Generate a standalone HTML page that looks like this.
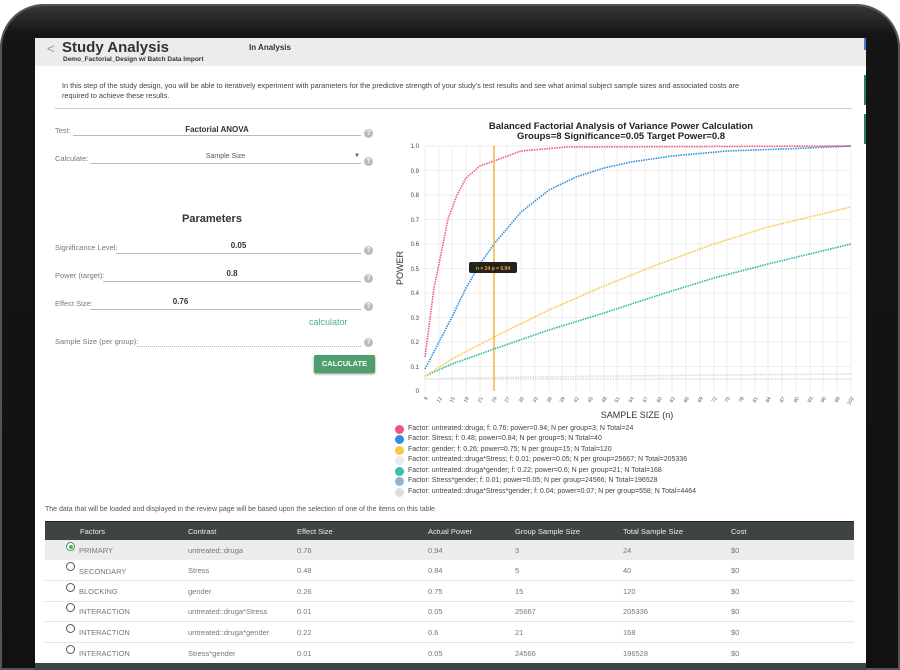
<!DOCTYPE html>
<html style="overflow:hidden;width:900px;height:670px"><head><meta charset="utf-8"><style>
*{margin:0;padding:0;box-sizing:border-box}
html,body{overflow:hidden}
body{width:900px;height:670px;overflow:hidden;background:#fff;font-family:"Liberation Sans",sans-serif;position:relative}
.a{position:absolute;white-space:nowrap}
.bezel{position:absolute;left:0;top:4px;width:900px;height:666px;background:linear-gradient(#3a3a3a,#151515 30px,#111);border-radius:44px 44px 0 0;box-shadow:inset 0 0 0 2px #555}
.screen{position:absolute;left:35px;top:38px;width:831px;height:632px;background:#fff;overflow:hidden}
.lbl{font-size:7.5px;color:#777}
.val{font-size:8px;color:#333;font-weight:bold;text-align:center}
.ul{position:absolute;height:1px;background:#bbb}
.q{position:absolute;width:9px;height:9px;border-radius:50%;background:#bbb;color:#fff;font-size:7px;line-height:9px;text-align:center;font-weight:bold}
.th{font-size:7.5px;color:#eee}
.td{font-size:7.5px;color:#777}
.rad{position:absolute;width:9px;height:9px;border-radius:50%;border:1px solid #555;background:#fff}
.lg{font-size:7px;color:#444}
.dot{position:absolute;width:9px;height:9px;border-radius:50%}
</style></head><body>
<div class="bezel"></div>
<div class="screen">
 <div class="a" style="left:0;top:0;width:831px;height:28px;background:#ececec"></div>
 <div class="a" style="left:829px;top:0;width:2px;height:12px;background:#4a7bd8"></div>
 <div class="a" style="left:829px;top:37px;width:2px;height:30px;background:#2d7a5c"></div>
 <div class="a" style="left:829px;top:76px;width:2px;height:30px;background:#2d7a5c"></div>
 <div class="a" style="left:12px;top:3px;font-size:13px;color:#999">&lt;</div>
 <div class="a" style="left:27px;top:1px;font-size:15px;font-weight:bold;color:#333">Study Analysis</div>
 <div class="a" style="left:28px;top:18px;font-size:6.5px;font-weight:bold;color:#333">Demo_Factorial_Design w/ Batch Data Import</div>
 <div class="a" style="left:214px;top:5px;font-size:8px;font-weight:bold;color:#333">In Analysis</div>
 <div class="a" style="left:27px;top:43px;font-size:7.3px;color:#444;line-height:10px">In this step of the study design, you will be able to iteratively experiment with parameters for the predictive strength of your study's test results and see what animal subject sample sizes and associated costs are<br>required to achieve these results.</div>
 <div class="a" style="left:20px;top:70px;width:797px;height:1px;background:#ccc"></div>

 <div class="a lbl" style="left:20px;top:88px">Test:</div><div class="ul" style="left:38px;top:97px;width:288px"></div>
 <div class="a val" style="left:38px;top:87px;width:288px;font-weight:bold">Factorial ANOVA</div><div class="q" style="left:329px;top:91px">?</div>
 <div class="a lbl" style="left:20px;top:116px">Calculate:</div><div class="ul" style="left:55px;top:125px;width:271px"></div>
 <div class="a" style="left:55px;top:115px;width:271px;text-align:center;font-size:7px;color:#555">Sample Size</div>
 <div class="a" style="left:319px;top:115px;font-size:6px;color:#555">▼</div><div class="q" style="left:329px;top:119px">?</div>
 <div class="a" style="left:147px;top:175px;font-size:11px;font-weight:bold;color:#333">Parameters</div>
 <div class="a lbl" style="left:20px;top:205px">Significance Level:</div><div class="ul" style="left:81px;top:215px;width:245px"></div>
 <div class="a val" style="left:81px;top:203px;width:245px">0.05</div><div class="q" style="left:329px;top:208px">?</div>
 <div class="a lbl" style="left:20px;top:233px">Power (target):</div><div class="ul" style="left:68px;top:243px;width:258px"></div>
 <div class="a val" style="left:68px;top:231px;width:258px">0.8</div><div class="q" style="left:329px;top:236px">?</div>
 <div class="a lbl" style="left:20px;top:261px">Effect Size:</div><div class="ul" style="left:55px;top:271px;width:271px"></div>
 <div class="a val" style="left:55px;top:259px;width:271px;padding-right:90px">0.76</div><div class="q" style="left:329px;top:264px">?</div>
 <div class="a" style="left:274px;top:279px;font-size:9px;color:#4fae8e">calculator</div>
 <div class="a lbl" style="left:20px;top:299px">Sample Size (per group):</div><div class="ul" style="left:102px;top:308px;width:224px;background:none;border-top:1px dotted #bbb"></div>
 <div class="q" style="left:329px;top:300px">?</div>
 <div class="a" style="left:279px;top:317px;width:61px;height:18px;background:#4f9e6d;color:#fff;font-size:7.5px;font-weight:bold;text-align:center;line-height:18px;border-radius:2px;box-shadow:0 1px 2px #888">CALCULATE</div>
</div>

<svg class="a" style="left:0;top:0" width="900" height="670">
<g font-family="Liberation Sans,sans-serif">
<text x="621" y="129" font-size="9.5" font-weight="bold" text-anchor="middle" fill="#222">Balanced Factorial Analysis of Variance Power Calculation</text>
<text x="621" y="139" font-size="9.5" font-weight="bold" text-anchor="middle" fill="#222">Groups=8 Significance=0.05 Target Power=0.8</text>
<g stroke="#eee" stroke-width="1">
<line x1="425" y1="146" x2="851" y2="146"/><line x1="425" y1="170.5" x2="851" y2="170.5"/><line x1="425" y1="195" x2="851" y2="195"/><line x1="425" y1="219.5" x2="851" y2="219.5"/><line x1="425" y1="244" x2="851" y2="244"/><line x1="425" y1="268.5" x2="851" y2="268.5"/><line x1="425" y1="293" x2="851" y2="293"/><line x1="425" y1="317.5" x2="851" y2="317.5"/><line x1="425" y1="342" x2="851" y2="342"/><line x1="425" y1="366.5" x2="851" y2="366.5"/>
<path d="M425 146V391M439 146V391M452 146V391M466 146V391M480 146V391M494 146V391M507 146V391M521 146V391M535 146V391M549 146V391M562 146V391M576 146V391M590 146V391M604 146V391M617 146V391M631 146V391M645 146V391M659 146V391M672 146V391M686 146V391M700 146V391M714 146V391M727 146V391M741 146V391M755 146V391M768 146V391M782 146V391M796 146V391M810 146V391M823 146V391M837 146V391M851 146V391"/>
</g>
<g font-size="6" fill="#444" text-anchor="end">
<text x="419" y="148">1.0</text><text x="419" y="173">0.9</text><text x="419" y="197">0.8</text><text x="419" y="222">0.7</text><text x="419" y="246">0.6</text><text x="419" y="271">0.5</text><text x="419" y="295">0.4</text><text x="419" y="320">0.3</text><text x="419" y="344">0.2</text><text x="419" y="369">0.1</text><text x="419" y="393">0</text>
</g>
<g font-size="5" fill="#555">
<text transform="translate(428,398) rotate(-60)" text-anchor="end">9</text>
<text transform="translate(442,398) rotate(-60)" text-anchor="end">12</text>
<text transform="translate(455,398) rotate(-60)" text-anchor="end">15</text>
<text transform="translate(469,398) rotate(-60)" text-anchor="end">18</text>
<text transform="translate(483,398) rotate(-60)" text-anchor="end">21</text>
<text transform="translate(497,398) rotate(-60)" text-anchor="end">24</text>
<text transform="translate(510,398) rotate(-60)" text-anchor="end">27</text>
<text transform="translate(524,398) rotate(-60)" text-anchor="end">30</text>
<text transform="translate(538,398) rotate(-60)" text-anchor="end">33</text>
<text transform="translate(552,398) rotate(-60)" text-anchor="end">36</text>
<text transform="translate(565,398) rotate(-60)" text-anchor="end">39</text>
<text transform="translate(579,398) rotate(-60)" text-anchor="end">42</text>
<text transform="translate(593,398) rotate(-60)" text-anchor="end">45</text>
<text transform="translate(607,398) rotate(-60)" text-anchor="end">48</text>
<text transform="translate(620,398) rotate(-60)" text-anchor="end">51</text>
<text transform="translate(634,398) rotate(-60)" text-anchor="end">54</text>
<text transform="translate(648,398) rotate(-60)" text-anchor="end">57</text>
<text transform="translate(662,398) rotate(-60)" text-anchor="end">60</text>
<text transform="translate(675,398) rotate(-60)" text-anchor="end">63</text>
<text transform="translate(689,398) rotate(-60)" text-anchor="end">66</text>
<text transform="translate(703,398) rotate(-60)" text-anchor="end">69</text>
<text transform="translate(717,398) rotate(-60)" text-anchor="end">72</text>
<text transform="translate(730,398) rotate(-60)" text-anchor="end">75</text>
<text transform="translate(744,398) rotate(-60)" text-anchor="end">78</text>
<text transform="translate(758,398) rotate(-60)" text-anchor="end">81</text>
<text transform="translate(771,398) rotate(-60)" text-anchor="end">84</text>
<text transform="translate(785,398) rotate(-60)" text-anchor="end">87</text>
<text transform="translate(799,398) rotate(-60)" text-anchor="end">90</text>
<text transform="translate(813,398) rotate(-60)" text-anchor="end">93</text>
<text transform="translate(826,398) rotate(-60)" text-anchor="end">96</text>
<text transform="translate(840,398) rotate(-60)" text-anchor="end">99</text>
<text transform="translate(854,398) rotate(-60)" text-anchor="end">102</text>
</g>
<text x="637" y="418" font-size="9" text-anchor="middle" fill="#333">SAMPLE SIZE (n)</text>
<text transform="translate(403,268) rotate(-90)" font-size="9" text-anchor="middle" fill="#333">POWER</text>
<g fill="none" stroke-width="1.6" stroke-dasharray="1.5 1">
<path stroke="#ddd" d="M425 379C500 377 700 375 851 374"/>
<path stroke="#ddd" d="M425 379H851"/>
<path stroke="#2db3a6" d="M425 376L452 364L494 349L549 330L604 313L659 295L714 278L768 264L851 244"/>
<path stroke="#f7c84a" d="M425 376L452 359L494 337L549 310L604 286L659 264L714 244L768 227L851 207"/>
<path stroke="#2e8fe0" d="M425 369L439 342L452 317L466 288L480 264L494 244L521 212L549 190L576 177L604 168L631 162L672 156L727 151L796 148.5L851 146"/>
<path stroke="#f0577a" d="M425 357L434 288L439 264L448 219L457 195L466 178L480 166L494 161L521 151L567 147L851 146"/>
</g>
<line x1="494" y1="146" x2="494" y2="391" stroke="#f5a623" stroke-width="1.3"/>
<rect x="469" y="262" width="48" height="11" rx="2" fill="#222"/>
<text x="493" y="270" font-size="5" fill="#f5a623" text-anchor="middle" font-weight="bold">n = 24 p = 0.94</text>
</g>
</svg>

<div class="dot" style="left:395px;top:425px;background:#f0577a"></div><div class="a lg" style="left:408px;top:425px">Factor: untreated::druga; f: 0.76; power=0.94; N per group=3; N Total=24</div>
<div class="dot" style="left:395px;top:435px;background:#2e8fe0"></div><div class="a lg" style="left:408px;top:435px">Factor: Stress; f: 0.48; power=0.84; N per group=5; N Total=40</div>
<div class="dot" style="left:395px;top:446px;background:#f7c84a"></div><div class="a lg" style="left:408px;top:446px">Factor: gender; f: 0.26; power=0.75; N per group=15; N Total=120</div>
<div class="dot" style="left:395px;top:456px;background:#e8eaee"></div><div class="a lg" style="left:408px;top:456px">Factor: untreated::druga*Stress; f: 0.01; power=0.05; N per group=25667; N Total=205336</div>
<div class="dot" style="left:395px;top:467px;background:#3dbcb0"></div><div class="a lg" style="left:408px;top:467px">Factor: untreated::druga*gender; f: 0.22; power=0.6; N per group=21; N Total=168</div>
<div class="dot" style="left:395px;top:477px;background:#90b4c8"></div><div class="a lg" style="left:408px;top:477px">Factor: Stress*gender; f: 0.01; power=0.05; N per group=24566; N Total=196528</div>
<div class="dot" style="left:395px;top:488px;background:#ddd"></div><div class="a lg" style="left:408px;top:488px">Factor: untreated::druga*Stress*gender; f: 0.04; power=0.07; N per group=558; N Total=4464</div>

<div class="a" style="left:45px;top:506px;font-size:7px;color:#555">The data that will be loaded and displayed in the review page will be based upon the selection of one of the items on this table</div>
<div class="a" style="left:45px;top:521px;width:809px;height:19px;background:#3e4441;border-top:1px solid #222"></div>
<div class="a th" style="left:80px;top:527px">Factors</div><div class="a th" style="left:188px;top:527px">Contrast</div><div class="a th" style="left:297px;top:527px">Effect Size</div><div class="a th" style="left:428px;top:527px">Actual Power</div><div class="a th" style="left:515px;top:527px">Group Sample Size</div><div class="a th" style="left:623px;top:527px">Total Sample Size</div><div class="a th" style="left:731px;top:527px">Cost</div>
<div class="a" style="left:45px;top:540px;width:809px;height:20px;background:#ececec"></div>
<div class="a" style="left:45px;top:580px;width:809px;height:1px;background:#e4e4e4"></div>
<div class="a" style="left:45px;top:601px;width:809px;height:1px;background:#e4e4e4"></div>
<div class="a" style="left:45px;top:621px;width:809px;height:1px;background:#e4e4e4"></div>
<div class="a" style="left:45px;top:642px;width:809px;height:1px;background:#e4e4e4"></div>
<div class="a" style="left:35px;top:663px;width:831px;height:7px;background:#3e4441"></div>

<div class="rad" style="left:66px;top:542px;border-color:#3a9a5a"><div style="position:absolute;left:1.5px;top:1.5px;width:4px;height:4px;border-radius:50%;background:#3cba5a"></div></div>
<div class="a td" style="left:79px;top:546px">PRIMARY</div><div class="a td" style="left:188px;top:546px">untreated::druga</div><div class="a td" style="left:297px;top:546px">0.76</div><div class="a td" style="left:428px;top:546px">0.94</div><div class="a td" style="left:515px;top:546px">3</div><div class="a td" style="left:623px;top:546px">24</div><div class="a td" style="left:731px;top:546px">$0</div>
<div class="rad" style="left:66px;top:562px"></div>
<div class="a td" style="left:79px;top:567px">SECONDARY</div><div class="a td" style="left:188px;top:566px">Stress</div><div class="a td" style="left:297px;top:566px">0.48</div><div class="a td" style="left:428px;top:566px">0.84</div><div class="a td" style="left:515px;top:566px">5</div><div class="a td" style="left:623px;top:566px">40</div><div class="a td" style="left:731px;top:566px">$0</div>
<div class="rad" style="left:66px;top:583px"></div>
<div class="a td" style="left:79px;top:587px">BLOCKING</div><div class="a td" style="left:188px;top:587px">gender</div><div class="a td" style="left:297px;top:587px">0.26</div><div class="a td" style="left:428px;top:587px">0.75</div><div class="a td" style="left:515px;top:587px">15</div><div class="a td" style="left:623px;top:587px">120</div><div class="a td" style="left:731px;top:587px">$0</div>
<div class="rad" style="left:66px;top:603px"></div>
<div class="a td" style="left:79px;top:607px">INTERACTION</div><div class="a td" style="left:188px;top:607px">untreated::druga*Stress</div><div class="a td" style="left:297px;top:607px">0.01</div><div class="a td" style="left:428px;top:607px">0.05</div><div class="a td" style="left:515px;top:607px">25667</div><div class="a td" style="left:623px;top:607px">205336</div><div class="a td" style="left:731px;top:607px">$0</div>
<div class="rad" style="left:66px;top:624px"></div>
<div class="a td" style="left:79px;top:628px">INTERACTION</div><div class="a td" style="left:188px;top:628px">untreated::druga*gender</div><div class="a td" style="left:297px;top:628px">0.22</div><div class="a td" style="left:428px;top:628px">0.6</div><div class="a td" style="left:515px;top:628px">21</div><div class="a td" style="left:623px;top:628px">168</div><div class="a td" style="left:731px;top:628px">$0</div>
<div class="rad" style="left:66px;top:645px"></div>
<div class="a td" style="left:79px;top:649px">INTERACTION</div><div class="a td" style="left:188px;top:649px">Stress*gender</div><div class="a td" style="left:297px;top:649px">0.01</div><div class="a td" style="left:428px;top:649px">0.05</div><div class="a td" style="left:515px;top:649px">24566</div><div class="a td" style="left:623px;top:649px">196528</div><div class="a td" style="left:731px;top:649px">$0</div>
</body></html>
